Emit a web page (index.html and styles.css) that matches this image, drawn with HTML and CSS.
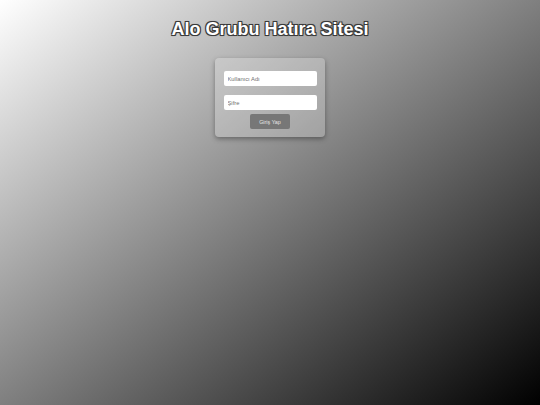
FILE: index.html
```html
<!DOCTYPE html>
<html lang="tr">
<head>
<meta charset="utf-8">
<title>Alo Grubu Hatıra Sitesi</title>
<link rel="stylesheet" href="styles.css">
</head>
<body>
<h1 class="title">Alo Grubu Hatıra Sitesi</h1>
<form class="card">
  <input class="field" type="text" placeholder="Kullanıcı Adı">
  <input class="field" type="password" placeholder="Şifre">
  <button class="btn" type="button">Giriş Yap</button>
</form>
</body>
</html>
```
FILE: styles.css
```css
html, body {
  margin: 0;
  padding: 0;
}
body {
  min-height: 100vh;
  background: linear-gradient(to bottom right, #ffffff, #000000);
  font-family: "Liberation Sans", Arial, sans-serif;
  display: flex;
  flex-direction: column;
  align-items: center;
}
.title {
  margin: 19px 0 0;
  font-size: 18px;
  font-weight: bold;
  line-height: 21px;
  color: #ffffff;
  text-shadow: -1px -1px 0 #3a3a3a, 1px -1px 0 #3a3a3a, -1px 1px 0 #3a3a3a, 1px 1px 0 #3a3a3a, 0 0 2px #000;
}
.card {
  margin-top: 18px;
  width: 110px;
  box-sizing: border-box;
  padding: 13px 8px 8px 8px;
  background: rgba(255, 255, 255, 0.22);
  border-radius: 4px;
  box-shadow: 0 2px 5px rgba(0, 0, 0, 0.35);
  display: flex;
  flex-direction: column;
  align-items: center;
}
.field {
  width: 93px;
  height: 15px;
  box-sizing: border-box;
  border: none;
  border-radius: 2px;
  background: #ffffff;
  padding: 0 4px;
  font-family: "Liberation Sans", Arial, sans-serif;
  font-size: 5.8px;
  color: #333;
  margin: 0 0 9px 0;
  outline: none;
}
.field:nth-of-type(2) {
  margin-bottom: 4px;
}
.field::placeholder {
  color: #6f6f6f;
}
.btn {
  width: 40px;
  height: 15px;
  border: none;
  border-radius: 2px;
  background: #777777;
  color: #e6e6e6;
  font-family: "Liberation Sans", Arial, sans-serif;
  font-size: 5.4px;
  padding: 0;
  cursor: pointer;
}
```
